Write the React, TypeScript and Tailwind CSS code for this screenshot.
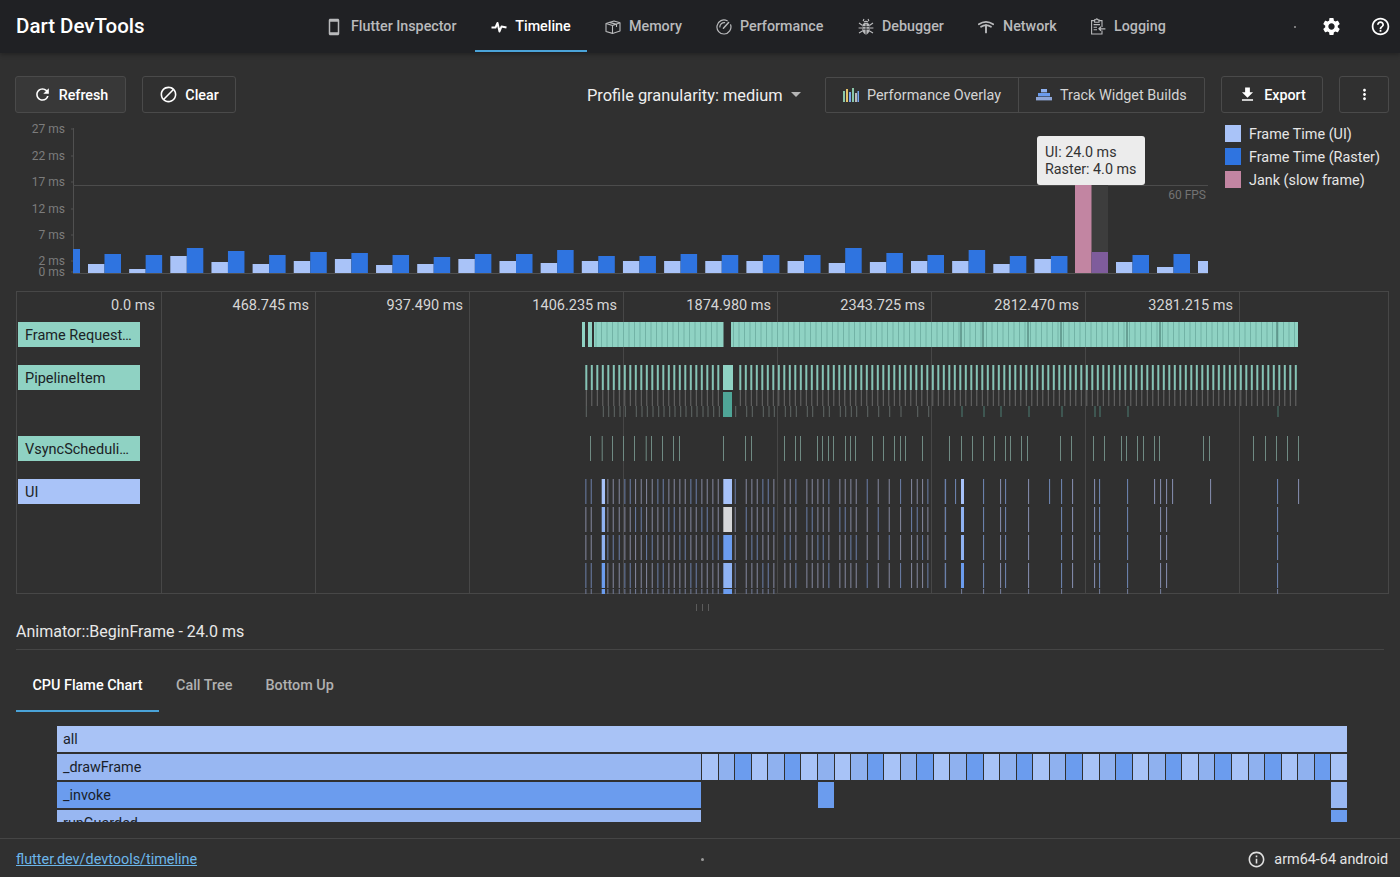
import React from "react";
import {
  MdBlock,
  MdFileDownload,
  MdHelpOutline,
  MdInfoOutline,
  MdMoreVert,
  MdOutlineSmartphone,
  MdRefresh,
  MdSettings,
} from "react-icons/md";

const LIGHT = "#a9c3f8";
const BLUE = "#2f74e0";
const ICON = "#b9babc";

// [ui top, raster top] for each pair of bars, first pair starts at x=88
const bars: [number, number][] = [
  [264, 254], [269, 255], [256, 248], [262, 251], [264, 255], [261, 252], [259, 253], [265, 255],
  [264, 257], [259, 254], [261, 254], [263, 250], [261, 256], [261, 256], [261, 254], [261, 255],
  [261, 255], [261, 255], [263, 248], [262, 253], [261, 255], [261, 250], [264, 256], [259, 256],
];
const barsAfterJank: [number, number][] = [[262, 255], [267, 254]];

const axis = [
  ["27 ms", 128], ["22 ms", 155], ["17 ms", 181], ["12 ms", 208], ["7 ms", 234], ["2 ms", 260], ["0 ms", 271],
] as const;

const timeLabels = ["0.0 ms", "468.745 ms", "937.490 ms", "1406.235 ms", "1874.980 ms", "2343.725 ms", "2812.470 ms", "3281.215 ms"];

const vsync = [
  590, 601.7, 612, 623, 634, 645.7, 651, 662, 673, 679, 723, 745, 751, 784, 795, 800, 817, 822, 828, 833, 845, 850, 855,
  872, 883, 894, 900, 905, 922, 949, 961, 972, 983, 994, 1005, 1010, 1021, 1027, 1060, 1071, 1093, 1104, 1121, 1126, 1137,
  1143, 1154, 1159, 1203, 1209, 1253, 1265, 1276, 1287, 1298,
];

const uiTicksLeft = [
  585.3, 590.7, 607.3, 612.7, 618.7, 624.3, 629.7, 635, 640.7, 646, 651.7, 657.3, 662.7, 668.3, 673.7, 679.3, 684.7, 690.3,
  695.7, 701.3, 706.7, 712.3, 717.7, 734.7, 745.7, 751.3, 756.7, 762.3, 767.7, 773.3, 784.3, 789.7, 795.3, 806.3, 811.7,
  817.3, 822.7, 828.3, 839.3, 844.7, 850.3, 855.7, 866.7, 877.7, 888.7, 900, 911, 916.7, 922, 927.3, 944.7,
];
const uiTicksRightTop = [945, 955, 983, 1000, 1005, 1028, 1049, 1061, 1072, 1094, 1099, 1127, 1154, 1160, 1166, 1172, 1210, 1277, 1298];
const uiTicksRightRest = [945, 983, 1000, 1005, 1028, 1061, 1072, 1094, 1099, 1127, 1160, 1166, 1277];

const pipelineThird = [
  585.3, 602.3, 607.7, 613.3, 619, 624.3, 635.3, 641, 646.3, 652, 657.7, 663, 668.7, 674, 679.7, 685, 690.7, 696, 702, 707, 712.7, 718.3,
  734.7, 745.7, 751.3, 762.3, 768, 773.3, 784.3, 789.7, 795.3, 806.3, 811.7, 822.7, 828.3, 839.3, 844.7, 850.3, 855.7, 866.7, 877.7, 888.7,
  900, 916.7, 927.7, 961, 983, 1000, 1028, 1061, 1094, 1099, 1127, 1277,
];

const darkFrameLines = [961, 983, 1028, 1061, 1127, 1160, 1277];

const range = (from: number, to: number, step: number) => {
  const out: number[] = [];
  for (let x = from; x <= to; x += step) out.push(x);
  return out;
};

function FrameChart() {
  return (
    <svg width="1216" height="171" viewBox="0 120 1216 171" className="block shrink-0">
      <line x1="73.5" y1="128" x2="73.5" y2="273" stroke="#505050" />
      <line x1="73" y1="273.5" x2="1208" y2="273.5" stroke="#505050" />
      <line x1="73" y1="185.5" x2="1208" y2="185.5" stroke="#4c4c4c" />
      {axis.map(([label, y]) => (
        <g key={label}>
          <text x="65" y={y + 4.5} textAnchor="end" fontSize="12" fill="#7c7c7c">{label}</text>
          <line x1="71" x2="74" y1={y + 1} y2={y + 1} stroke="#505050" />
        </g>
      ))}
      <text x="1206" y="199" textAnchor="end" fontSize="12" fill="#737373">60 FPS</text>

      <rect x="73" y="249" width="7" height="24" fill={BLUE} />
      {bars.map(([ui, raster], i) => {
        const x = 88 + i * 41.15;
        return (
          <g key={i}>
            <rect x={x} y={ui} width="16.5" height={273 - ui} fill={LIGHT} />
            <rect x={x + 16.5} y={raster} width="16.5" height={273 - raster} fill={BLUE} />
          </g>
        );
      })}
      <rect x="1091" y="185" width="17" height="67" fill="#3d3d3d" />
      <rect x="1075" y="185" width="16.5" height="88" fill="#c285a2" />
      <rect x="1091.5" y="252" width="16.5" height="21" fill="#7f5c9c" />
      {barsAfterJank.map(([ui, raster], i) => {
        const x = 1116 + i * 41;
        return (
          <g key={i}>
            <rect x={x} y={ui} width="16.5" height={273 - ui} fill={LIGHT} />
            <rect x={x + 16.5} y={raster} width="16.5" height={273 - raster} fill={BLUE} />
          </g>
        );
      })}
      <rect x="1198" y="261" width="10" height="12" fill={LIGHT} />
    </svg>
  );
}

function Lanes() {
  // viewBox is in page coordinates so ticks can be read straight off the reference
  const uiRows = [
    { y: 479, h: 25, block: "#a7c2f9", wide: "#a7c2f9" },
    { y: 507, h: 25, block: "#d6d7d9", wide: "#8fb2f2" },
    { y: 535, h: 25, block: "#6b9cee", wide: "#8fb2f2" },
    { y: 563, h: 25, block: "#8fb3f3", wide: "#6b9cee" },
  ];
  return (
    <svg width="1371" height="302" viewBox="17 292 1371 302" className="absolute left-0 top-0">
      {/* Frame Request */}
      <rect x="582" y="322" width="3" height="25" fill="#8fd2c3" />
      <rect x="588" y="322" width="4" height="25" fill="#8fd2c3" />
      <rect x="594" y="322" width="129.5" height="25" fill="#8fd2c3" />
      <rect x="731" y="322" width="567" height="25" fill="#8fd2c3" />
      {range(596, 1296, 5.5)
        .filter((x) => x < 722 || x > 732)
        .map((x) => (
          <line key={x} x1={x} x2={x} y1="322" y2="347" stroke="#72b3a6" strokeWidth="1" />
        ))}
      {darkFrameLines.map((x) => (
        <line key={x} x1={x} x2={x} y1="322" y2="347" stroke="#3f6f66" strokeWidth="1" />
      ))}

      {/* PipelineItem */}
      {range(585.3, 1300, 5.5)
        .filter((x) => x < 722 || x > 735)
        .map((x) => (
          <g key={x}>
            <rect x={x} y="365" width="2" height="25" fill="#86c4b6" />
            <rect x={x + 0.5} y="390" width="1" height="16" fill="#6a6a6a" />
          </g>
        ))}
      {pipelineThird.map((x) => (
        <rect key={x} x={x + 0.5} y="406" width="1" height="11" fill={x > 950 ? "#4d7d73" : "#606866"} />
      ))}
      <rect x="723" y="365" width="10" height="25" fill="#8fd2c3" />
      <rect x="723" y="392" width="9" height="25" fill="#4fa597" />

      {/* VsyncSchedulingItem */}
      {vsync.map((x) => (
        <rect key={x} x={x} y="436" width="1" height="25" fill="#6f8a83" />
      ))}

      {/* UI */}
      {uiRows.map((row, r) => (
        <g key={row.y}>
          {uiTicksLeft.map((x) => (
            <rect key={x} x={x} y={row.y} width="1.1" height={row.h} fill={(Math.round(x) + r) % 3 === 0 ? "#66789f" : "#7d8196"} />
          ))}
          {(r === 0 ? uiTicksRightTop : uiTicksRightRest).map((x) => (
            <rect key={x} x={x} y={row.y} width="1.1" height={row.h} fill={x % 2 === 0 ? "#7f87a6" : "#6a80aa"} />
          ))}
          <rect x="601.7" y={row.y} width="3.3" height={row.h} fill={row.wide} />
          <rect x="961" y={row.y} width="3" height={row.h} fill={row.wide} />
          <rect x="723.3" y={row.y} width="8.7" height={row.h} fill={row.block} />
        </g>
      ))}
      {[...uiTicksLeft.slice(0, 30), 961, 983, 1000, 1028, 1061, 1099, 1127, 1160, 1277].map((x) => (
        <rect key={x} x={x} y="589" width="1.1" height="5" fill="#6d7690" />
      ))}
      <rect x="601.7" y="589" width="3.3" height="5" fill="#6b9cee" />
      <rect x="723.3" y="589" width="8.7" height="5" fill="#6b9cee" />
    </svg>
  );
}

function MemoryIcon() {
  return (
    <svg width="16" height="14" viewBox="0 0 16 14" fill="none" stroke={ICON} strokeWidth="1.1" strokeLinejoin="round" className="mr-2 shrink-0">
      <path d="M1 3.5 L9 1 L15 2.8 L15 11 L7.5 13.4 L1 11.5 Z" />
      <path d="M1 3.5 L7.5 5.6 L15 2.8 M7.5 5.6 L7.5 13.4 M4.5 2.4 L11.5 4.4 L11.5 7" />
    </svg>
  );
}

function GaugeIcon() {
  return (
    <svg width="16" height="16" viewBox="0 0 16 16" fill="none" stroke={ICON} strokeWidth="1.2" strokeLinecap="round" className="mr-2 shrink-0">
      <path d="M11.2 1.8 A7 7 0 1 0 14.6 5.8" />
      <path d="M7.4 9.2 L12.6 3.6" strokeWidth="1.5" />
      <path d="M3.8 8 A4.4 4.4 0 0 1 8.6 3.7" />
    </svg>
  );
}

function BugIcon() {
  return (
    <svg width="16" height="17" viewBox="0 0 16 17" fill={ICON} stroke={ICON} className="mr-2 shrink-0">
      <path d="M4.8 6 Q8 3.5 11.2 6 L11.6 12 Q11 16 8 16.4 Q5 16 4.4 12 Z" stroke="none" />
      <path d="M5.2 3 Q5.6 1.5 6 1 M10.8 3 Q10.4 1.5 10 1 M6 4.2 A2.4 2 0 0 1 10 4.2" fill="none" strokeWidth="1.2" />
      <path d="M1 5 L4.6 7.4 M15 5 L11.4 7.4 M0.6 10 L4.4 10 M15.4 10 L11.6 10 M1 15 L4.8 12.8 M15 15 L11.2 12.8" fill="none" strokeWidth="1.2" />
      <path d="M5 8.6 L11 8.6 M5 11.2 L11 11.2 M8 6 L8 16" fill="none" stroke="#202124" strokeWidth="0.8" />
    </svg>
  );
}

function NetworkIcon() {
  return (
    <svg width="16" height="14" viewBox="0 0 16 14" fill="none" stroke={ICON} strokeLinecap="round" className="mr-[9px] shrink-0">
      <path d="M0.8 4.2 Q8 -0.6 15.2 4.2" strokeWidth="1.8" />
      <path d="M3 6.8 Q8 3.4 13 6.8" strokeWidth="1.7" />
      <path d="M8 5.2 L8 12.4" strokeWidth="1.9" />
    </svg>
  );
}

function LoggingIcon() {
  return (
    <svg width="16" height="17" viewBox="0 0 16 17" fill="none" stroke={ICON} strokeWidth="1.1" className="mr-2 shrink-0">
      <path d="M5 2.6 L1.6 2.6 L1.6 16 L12 16 L12 12.6 M12 9 L12 2.6 L8.6 2.6" />
      <path d="M4.6 4.2 L4.6 1.8 L5.8 1.8 Q6.8 0 7.8 1.8 L9 1.8 L9 4.2 Z" />
      <path d="M3.6 6.6 L10 6.6 M3.6 9.2 L7 9.2 M3.6 11.8 L7 11.8" />
      <path d="M15.4 10.8 L9 10.8 M11 8.8 L9 10.8 L11 12.8" strokeWidth="1.3" />
    </svg>
  );
}

function Chip({ label, color, className }: { label: string; color: string; className: string }) {
  return (
    <div
      className={`h-[25px] w-[122px] truncate pl-[7px] pt-[1px] text-[14.5px] leading-[25px] text-[#1b2326] ${className}`}
      style={{ backgroundColor: color }}
    >
      {label}
    </div>
  );
}

function OutlineButton({ children, className }: { children: React.ReactNode; className: string }) {
  return (
    <button className={`flex h-[37px] shrink-0 items-center justify-center rounded-[3px] border border-[#4a4a4a] pt-[2px] text-[14.3px] font-medium text-white ${className}`}>
      {children}
    </button>
  );
}

function NavTab({ icon, label, className }: { icon: React.ReactNode; label: string; className: string }) {
  return (
    <div className={`flex shrink-0 items-center text-[14.3px] font-medium text-[#b9babc] ${className}`}>
      {icon}
      <span>{label}</span>
    </div>
  );
}

export default function App() {
  const cellColors = ["#a8c3f7", "#8fb1ef", "#6b9cee"];
  const cellOrder = [0, 1, 2, 0, 1, 2, 0, 1, 0, 1, 2, 0, 1, 2, 0, 1, 2, 0, 1, 2, 0, 1, 2, 0, 1, 2, 0, 1, 2, 0, 1, 2, 0, 1, 2, 0, 1, 2, 0];

  return (
    <div className="flex h-[877px] w-[1400px] flex-col overflow-hidden bg-[#303030] font-[Roboto]">
      {/* Top bar */}
      <header className="flex h-[53px] shrink-0 items-center bg-[#202124] shadow-[0_2px_4px_rgba(0,0,0,0.25)]">
        <div className="ml-4 w-[313px] shrink-0 pb-px text-[20.5px] font-medium text-white">Dart DevTools</div>
        <NavTab className="w-[148px]" label="Flutter Inspector" icon={<MdOutlineSmartphone className="mr-[8px] ml-[-4px] text-[#b9babc]" size={18} />} />
        <div className="ml-[-2px] flex h-[53px] w-[112px] shrink-0 flex-col items-center">
          <div className="flex flex-1 items-center pt-[3px] text-[14.3px] font-medium text-white">
            <svg width="16" height="16" viewBox="0 0 16 16" className="mr-[8px]" fill="none" stroke="white" strokeWidth="2" strokeLinejoin="round">
              <polyline points="0.5,8.5 4.5,8.5 6.5,4 8.5,12.5 10.5,7.5 15.5,8.5" />
            </svg>
            Timeline
          </div>
          <div className="mb-[1px] h-[2px] w-full bg-[#4aa3d8]" />
        </div>
        <NavTab className="ml-[18px] w-[111px]" label="Memory" icon={<MemoryIcon />} />
        <NavTab className="w-[142px]" label="Performance" icon={<GaugeIcon />} />
        <NavTab className="w-[120px]" label="Debugger" icon={<BugIcon />} />
        <NavTab className="w-[112px]" label="Network" icon={<NetworkIcon />} />
        <NavTab className="w-[204px]" label="Logging" icon={<LoggingIcon />} />
        <div className="h-[2px] w-[2px] shrink-0 rounded-full bg-[#9a9a9a]" />
        <MdSettings className="ml-[25px] shrink-0 text-white" size={21} />
        <MdHelpOutline className="ml-[28px] shrink-0 text-white" size={21} />
      </header>

      {/* Toolbar */}
      <div className="mt-[23px] flex h-[37px] shrink-0 items-center px-[15px]">
        <OutlineButton className="w-[111px] bg-[#383838]">
          <MdRefresh className="mr-[7px] mt-[-2px]" size={19} />
          Refresh
        </OutlineButton>
        <OutlineButton className="ml-4 w-[94px]">
          <MdBlock className="mr-[7px] mt-[-2px]" size={19} />
          Clear
        </OutlineButton>
        <div className="ml-[351px] flex w-[238px] shrink-0 items-center pt-[3px] text-[16.4px] text-[#eeeeee]">
          Profile granularity: medium
          <span className="ml-[8px] mt-[-2px] h-0 w-0 border-x-[5px] border-t-[5px] border-x-transparent border-t-[#b5b5b5]" />
        </div>
        <div className="flex h-[36px] shrink-0 items-center rounded-[2px] border border-[#4a4a4a] text-[14.4px] text-[#d4d4d4]">
          <div className="flex h-full w-[193px] items-center border-r border-[#4a4a4a] pl-[17px] pt-[2px]">
            <svg width="16" height="14" viewBox="0 0 16 14" className="mr-2 mt-[-2px]">
              <rect x="0" y="3" width="2" height="11" fill="#8ac5a8" />
              <rect x="3" y="1" width="2" height="13" fill="#e2c36b" />
              <rect x="6" y="4" width="2" height="10" fill="#76a4ee" />
              <rect x="9" y="0" width="2" height="14" fill="#8ac5a8" />
              <rect x="12" y="5" width="2" height="9" fill="#b9babc" />
              <rect x="14.5" y="3" width="1.5" height="11" fill="#76a4ee" />
            </svg>
            Performance Overlay
          </div>
          <div className="flex h-full w-[185px] items-center pl-[17px] pt-[2px]">
            <svg width="16" height="12" viewBox="0 0 16 12" className="mr-[8px] mt-[-2px]">
              <rect x="5" y="0" width="6" height="3.4" fill="#8fb1ef" />
              <rect x="2" y="4" width="12" height="3.4" fill="#6b9cee" />
              <rect x="0" y="8" width="16" height="3.4" fill="#8fa7d8" />
            </svg>
            Track Widget Builds
          </div>
        </div>
        <OutlineButton className="ml-4 w-[102px]">
          <MdFileDownload className="mr-[7px] mt-[-2px]" size={19} />
          Export
        </OutlineButton>
        <OutlineButton className="ml-4 w-[50px]">
          <MdMoreVert className="mt-[-2px]" size={17} />
        </OutlineButton>
      </div>

      {/* Frame chart and legend */}
      <div className="relative mt-[7px] flex h-[171px] shrink-0">
        <FrameChart />
        <div className="ml-[9px] mt-[5px] flex flex-col gap-[6px] text-[14.4px] text-[#e6e6e6]">
          {[
            ["Frame Time (UI)", "bg-[#a9c3f8]"],
            ["Frame Time (Raster)", "bg-[#2f74e0]"],
            ["Jank (slow frame)", "bg-[#c285a2]"],
          ].map(([label, swatch]) => (
            <div key={label} className="flex h-[17px] items-center gap-2">
              <span className={`h-[17px] w-4 ${swatch}`} />
              <span className="pt-[2px]">{label}</span>
            </div>
          ))}
        </div>
        <div className="absolute left-[1037px] top-[16px] flex h-[49px] w-[108px] flex-col justify-center rounded-[3px] bg-[#ececec] pl-2 pt-px text-[14.3px] leading-[17px] text-[#333]">
          <div>UI: 24.0 ms</div>
          <div>Raster: 4.0 ms</div>
        </div>
      </div>

      {/* Timeline lanes */}
      <div className="relative mx-4 flex h-[303px] w-[1373px] shrink-0 border border-[#474747]">
        {timeLabels.map((label, i) => (
          <div
            key={label}
            className={`h-full shrink-0 border-r border-[#474747] pr-[6px] pt-[3px] text-right text-[14.5px] text-[#d6d6d6] ${i === 0 ? "w-[145px]" : "w-[154px]"}`}
          >
            {label}
          </div>
        ))}
        <Lanes />
        <div className="absolute left-[1px] top-[30px] flex flex-col">
          <Chip label="Frame Request…" color="#8fd2c3" className="" />
          <Chip label="PipelineItem" color="#8fd2c3" className="mt-[18px]" />
          <Chip label="VsyncScheduli…" color="#8fd2c3" className="mt-[46px]" />
          <Chip label="UI" color="#a9c3f8" className="mt-[18px]" />
        </div>
      </div>

      {/* Drag handle */}
      <div className="flex h-[26px] shrink-0 items-center justify-center gap-[5px] pl-[5px] pt-[1px]">
        <span className="h-[7px] w-px bg-[#5c5c5c]" />
        <span className="h-[7px] w-px bg-[#5c5c5c]" />
        <span className="h-[7px] w-px bg-[#5c5c5c]" />
      </div>

      {/* Event details */}
      <div className="mx-4 flex h-[30px] shrink-0 items-center border-b border-[#454545] pb-[6px] text-base text-[#e8e8e8]">
        Animator::BeginFrame - 24.0 ms
      </div>
      <div className="ml-4 flex h-[62px] shrink-0 text-[14.4px] font-medium text-[#b0b0b0]">
        <div className="flex h-full w-[143px] items-center justify-center border-b-2 border-[#4aa3d8] pt-[12px] text-white">CPU Flame Chart</div>
        <div className="ml-[17px] flex items-center pt-[9px]">Call Tree</div>
        <div className="ml-[33px] flex items-center pt-[9px]">Bottom Up</div>
      </div>

      {/* CPU flame chart */}
      <div className="ml-[57px] mt-[14px] flex h-[96px] w-[1290px] shrink-0 flex-col gap-[2px] overflow-hidden text-[14.4px] text-[#1a1f2b]">
        <div className="flex h-[26px] shrink-0 items-center bg-[#a9c3f6] pl-[6px] pt-[2px]">all</div>
        <div className="flex h-[26px] shrink-0">
          <div className="flex w-[644px] items-center bg-[#98b7f2] pl-[6px] pt-[2px]">_drawFrame</div>
          <div className="ml-px flex flex-1 gap-px">
            {cellOrder.map((c, i) => (
              <div key={i} className="flex-1" style={{ backgroundColor: cellColors[c] }} />
            ))}
          </div>
        </div>
        <div className="flex h-[26px] shrink-0">
          <div className="flex w-[644px] items-center bg-[#6b9cee] pl-[6px] pt-[2px]">_invoke</div>
          <div className="ml-[117px] w-4 bg-[#6b9cee]" />
          <div className="ml-auto w-4 bg-[#98b7f2]" />
        </div>
        <div className="flex h-[26px] shrink-0">
          <div className="flex w-[644px] items-center bg-[#98b7f2] pl-[6px] pt-[2px]">runGuarded</div>
          <div className="ml-auto w-4 bg-[#6b9cee]" />
        </div>
      </div>

      {/* Status bar */}
      <footer className="mt-[16px] flex h-[40px] shrink-0 items-center border-t border-[#454545] pl-4 pr-3 pt-[2px] text-[14.4px]">
        <a className="w-[685px] text-[#6cb6ea] underline">flutter.dev/devtools/timeline</a>
        <span className="h-[3px] w-[3px] rounded-full bg-[#9a9a9a]" />
        <MdInfoOutline className="ml-[543px] text-[#e0e0e0]" size={19} />
        <span className="ml-auto text-[#e4e4e4]">arm64-64 android</span>
      </footer>
    </div>
  );
}
